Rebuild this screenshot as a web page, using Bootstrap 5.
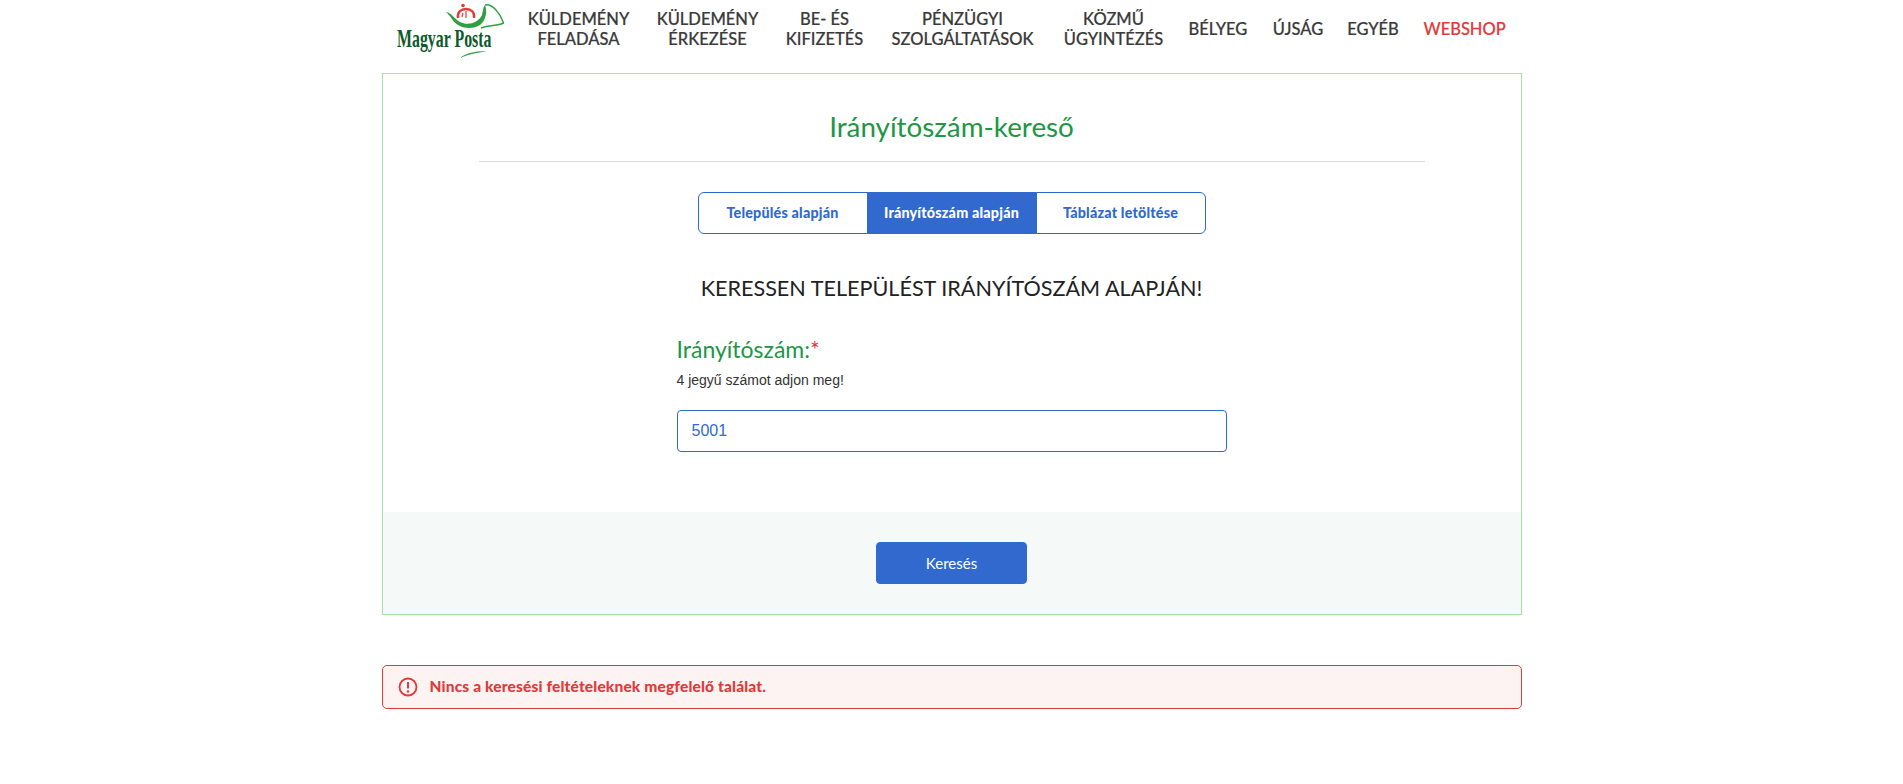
<!DOCTYPE html>
<html lang="hu">
<head>
<meta charset="utf-8">
<title>Irányítószám-kereső</title>
<link href="https://cdn.jsdelivr.net/npm/bootstrap@5.3.0/dist/css/bootstrap.min.css" rel="stylesheet">
<style>
body{font-family:Lato,"Open Sans",sans-serif;color:#333;background:#fff;overflow:hidden}
.page-wrap{width:1140px;margin:0 auto}
.top-bar{height:73px;padding:0 0 14px 12px}
.logo-svg{width:110px;height:58px;display:block;margin-right:24px;flex:none}
.menu-link{font-size:16.5px;font-weight:500;line-height:19.5px;color:#3a3a3a;text-align:center;text-decoration:none;text-transform:uppercase;flex:none;-webkit-text-stroke:.2px}
.menu-link.red{color:#e03a3a}
.m1{width:102px;margin-right:27px}.m2{width:102px;margin-right:26px}.m3{width:80px;margin-right:25px}.m4{width:146px;margin-right:28px}.m5{width:100px;margin-right:25px}.m6{width:58px;margin-right:25px}.m7{width:53px;margin-right:22px}.m8{width:53px;margin-right:24px}.m9{width:80px}
.panel-box{height:542px;border:1px solid #a5e3a8}
.panel-main{height:438px;padding:0 96px}
.panel-title{font-size:27.800px;font-weight:400;color:#1e9645;text-align:center;line-height:34px;padding-top:36px;margin:0;height:88px;border-bottom:1px solid #dcdcdc}
.tab-row{margin-top:30px;width:508px;height:42px}
.tab-row .btn{flex:1 1 0;padding:0;font-size:14.300px;font-weight:900;letter-spacing:.2px;line-height:40px;color:#3169cf;border-color:#3169cf;background:#fff}
.tab-row .btn.on{background:#3169cf;color:#fff}
.big-head{font-size:21.600px;font-weight:400;color:#222;text-align:center;line-height:30px;margin:39px 0 0}
.form-zone{width:550px;margin:0 auto;padding-top:31px}
.zip-label{font-size:23px;line-height:30px;color:#1e9645;margin:0;display:block}
.zip-label span{color:#e03a3a}
.zip-hint{font-family:"Liberation Sans",Arial,sans-serif;font-size:14px;line-height:20px;color:#333;margin:6px 0 20px}
.zip-input{height:42px;border:1px solid #3169cf;border-radius:4px;font-family:"Liberation Sans",Arial,sans-serif;font-size:16px;color:#3169cf;padding:0 14px}
.panel-foot{height:102px;background:#f5faf8}
.go-btn{width:151px;height:42px;padding:0;font-size:15px;color:#fff;background:#3169cf;border-color:#3169cf;border-radius:4px}
.no-hit{margin:50px 0 0;height:44px;padding:0 0 0 15px;background:#fdf3f2;border:1px solid #e03a3a;border-radius:5px;color:#e03a3a;font-size:15.500px;font-weight:900;letter-spacing:.15px;gap:12px}
.no-hit svg{width:20px;height:20px;flex:none}
</style>
</head>
<body>
<div class="page-wrap">
  <nav class="top-bar d-flex align-items-center">
    <svg class="logo-svg" viewBox="0 0 110 58" aria-label="Magyar Posta">
      <path d="M52 11C58 12 60 18 66 21C74 25 84 22 88 14C89 10 89 6 91 4C93 10 93 18 86 24C78 29 64 28 58 18C56 15 54 13 52 11Z" fill="#2ea043"/>
      <path d="M91 4C98 2 106 12 109.500 22C104 25 96 24 87 27" fill="none" stroke="#2ea043" stroke-width="1.500" stroke-linejoin="round"/>
      <path d="M64 17C63 11 67 8 72 8C77 8 81 11 80 17" fill="none" stroke="#e03a3a" stroke-width="2.400"/>
      <circle cx="69" cy="4.500" r="1.800" fill="#e03a3a"/>
      <path d="M72 10V17M69 12L68 16" stroke="#e03a3a" stroke-width="1.200" fill="none"/>
      <text transform="translate(3 46) scale(.635 1)" font-family="Liberation Serif,serif" font-weight="700" font-size="25" fill="#0d5a2c">Magyar Posta</text>
      <path d="M66 57C71 53 79 50 93 50C83 52 75 53 66 57Z" fill="#2ea043"/>
    </svg>
    <a class="menu-link m1" href="#">Küldemény<br>feladása</a>
    <a class="menu-link m2" href="#">Küldemény<br>érkezése</a>
    <a class="menu-link m3" href="#">Be- és<br>kifizetés</a>
    <a class="menu-link m4" href="#">Pénzügyi<br>szolgáltatások</a>
    <a class="menu-link m5" href="#">Közmű<br>ügyintézés</a>
    <a class="menu-link m6" href="#">Bélyeg</a>
    <a class="menu-link m7" href="#">Újság</a>
    <a class="menu-link m8" href="#">Egyéb</a>
    <a class="menu-link m9 red" href="#">Webshop</a>
  </nav>
  <main class="panel-box">
    <div class="panel-main">
      <h1 class="panel-title">Irányítószám-kereső</h1>
      <div class="d-flex justify-content-center">
        <div class="btn-group tab-row" role="group">
          <a class="btn" href="#">Település alapján</a>
          <a class="btn on" href="#">Irányítószám alapján</a>
          <a class="btn" href="#">Táblázat letöltése</a>
        </div>
      </div>
      <h2 class="big-head">KERESSEN TELEPÜLÉST IRÁNYÍTÓSZÁM ALAPJÁN!</h2>
      <form class="form-zone">
        <label class="zip-label" for="zip">Irányítószám:<span>*</span></label>
        <p class="zip-hint">4 jegyű számot adjon meg!</p>
        <input class="form-control zip-input" id="zip" type="text" value="5001">
      </form>
    </div>
    <div class="panel-foot d-flex align-items-center justify-content-center">
      <button class="btn go-btn" type="button">Keresés</button>
    </div>
  </main>
  <div class="alert no-hit d-flex align-items-center" role="alert">
    <svg viewBox="0 0 20 20" fill="none" stroke="#e03a3a" stroke-width="1.800"><circle cx="10" cy="10" r="8.500"/><path d="M10 5v6.500" stroke-width="2"/><circle cx="10" cy="14.500" r="1.200" fill="#e03a3a" stroke="none"/></svg>
    <span>Nincs a keresési feltételeknek megfelelő találat.</span>
  </div>
</div>
</body>
</html>
